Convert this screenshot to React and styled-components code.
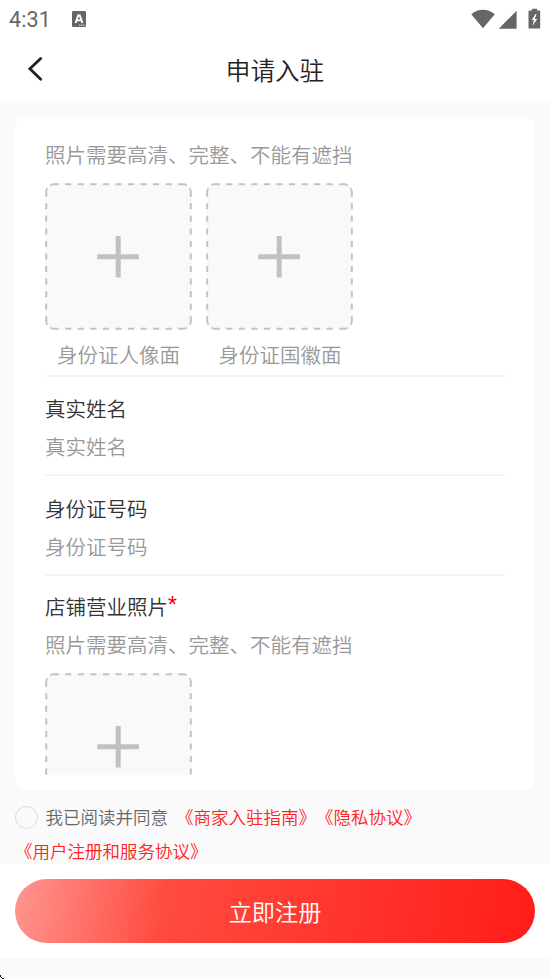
import React from "react";
import styled, { createGlobalStyle } from "styled-components";

const fontStack = '"Noto Sans CJK SC DemiLight", "Noto Sans CJK SC", sans-serif';

const GlobalStyle = createGlobalStyle`
  * { box-sizing: border-box; }
  body {
    margin: 0;
    background: #fafafa;
    font-family: ${fontStack};
    text-spacing-trim: space-all;
  }
`;

const Screen = styled.div`
  width: 550px;
  height: 979px;
  display: flex;
  flex-direction: column;
  overflow: hidden;
  background: #fafafa;
  position: relative;
`;

const StatusBar = styled.div`
  height: 38px;
  flex: none;
  padding: 0 9px 0 9px;
  display: flex;
  align-items: center;
  background: #fff;
`;

const Clock = styled.span`
  width: 63px;
  padding-top: 1px;
  font: 400 21.5px/38px Roboto, sans-serif;
  color: #666;
  letter-spacing: 0.1px;
`;

const StatusIcons = styled.div`
  margin-left: auto;
  display: flex;
`;

const Header = styled.header`
  height: 63px;
  flex: none;
  background: #fff;
  display: grid;
  grid-template-columns: 70px 1fr 70px;
  align-items: center;
`;

const BackButton = styled.button`
  border: 0;
  padding: 0 0 1px 26px;
  height: 63px;
  background: none;
  display: flex;
  align-items: center;
`;

const Title = styled.h1`
  margin: 0;
  padding-bottom: 1px;
  text-align: center;
  font-size: 24.6px;
  line-height: 36px;
  font-weight: 400;
  color: #222;
`;

const Card = styled.main`
  margin: 15px 15px 0;
  height: 674px;
  flex: none;
  padding: 23px 30px 15px;
  border-radius: 13px;
  background: #fff;
`;

const Scroller = styled.div`
  height: 636px;
  overflow: hidden;
`;

const Section = styled.section`
  height: ${(p) => p.$height}px;
  padding-top: ${(p) => p.$top}px;
  border-bottom: 2px solid #f5f5f5;
`;

const Line = styled.div`
  height: 30px;
  font-size: 20.5px;
  line-height: 30px;
  white-space: nowrap;
  color: ${(p) => (p.$muted ? "#999" : "#333")};
  & + & { margin-top: 8px; }
`;

const Required = styled.span`
  font-family: Roboto, sans-serif;
  line-height: 1;
  vertical-align: 4px;
  color: #f00;
`;

const Uploads = styled.div`
  display: flex;
  gap: 14.4px;
  padding-top: ${(p) => p.$top}px;
`;

const Upload = styled.div`
  width: 147px;
  display: flex;
  flex-direction: column;
  gap: 9px;
  align-items: center;
`;

const Agreement = styled.div`
  height: 74px;
  flex: none;
  padding: 10px 15px 0;
  display: flex;
  flex-wrap: wrap;
  align-content: flex-start;
  font-size: 17.5px;
  line-height: 34px;
  color: #666;
`;

const Radio = styled.span`
  width: 23px;
  height: 23px;
  margin: 6px 7.5px 0 0;
  border: 1.5px solid #dcdcdc;
  border-radius: 50%;
`;

const Consent = styled.span`
  margin-right: 8px;
`;

const PolicyLink = styled.a`
  color: #ff221d;
`;

const Footer = styled.footer`
  height: 94px;
  flex: none;
  padding: 14.5px 15px 0;
  background: #fff;
`;

const SubmitButton = styled.button`
  display: block;
  width: 100%;
  height: 64.5px;
  padding: 0;
  border: 0;
  border-radius: 33px;
  background: linear-gradient(100deg, #ff9690 0%, #ff4b40 29%, #ff1d18 100%);
  color: #fff;
  font: 400 23.2px/34px ${fontStack};
`;

const CornerMark = styled.svg`
  position: absolute;
  left: 0;
  bottom: 0;
`;

function UploadTile() {
  return (
    <svg width="147" height="147" viewBox="0 0 147 147" fill="none">
      <rect x="0.3" y="0.3" width="146.4" height="146.4" rx="11" fill="#f9f9f9" />
      <path
        d="M7.7 1.2h131.6M7.7 145.8h131.6M1.2 7.7v131.6M145.8 7.7v131.6"
        stroke="#c2c2c2" strokeWidth="2" strokeDasharray="6 6.56"
      />
      <path
        d="M1.2 8Q1.5 6.4 2.5 5.2M8 1.2Q6.4 1.5 5.2 2.5M139 1.2Q140.6 1.5 141.8 2.5M145.8 8Q145.5 6.4 144.5 5.2M1.2 139Q1.5 140.6 2.5 141.8M8 145.8Q6.4 145.5 5.2 144.5M139 145.8Q140.6 145.5 141.8 144.5M145.8 139Q145.5 140.6 144.5 141.8"
        stroke="#c8c8c8" strokeWidth="1.8"
      />
      <path d="M73.2 53v41.4M52.3 73.7h41.6" stroke="#c1c1c1" strokeWidth="5" />
    </svg>
  );
}

export default function App() {
  return (
    <>
      <GlobalStyle />
      <Screen lang="zh-CN">
        <StatusBar>
          <Clock>4:31</Clock>
          <svg width="14" height="16" viewBox="0 0 14 16">
            <rect width="14" height="16" rx="1.3" fill="#666" />
            <path d="M3.6 12 6.2 4.5h1.6l2.6 7.5M4.8 9.4h4.4" fill="none" stroke="#fff" strokeWidth="1.9" />
            <path d="M7 14.2h6" stroke="#fff" strokeWidth="0.9" strokeDasharray="1.4 0.7" />
          </svg>
          <StatusIcons>
            <svg width="70" height="22" viewBox="471 7 70 22" fill="#666">
              <path d="M471.2 13.2Q483 4.4 494.8 13.2L483 27.2Z" />
              <path d="M516.6 9.7v18h-17.8z" />
              <path fillRule="evenodd" d="M532 7.8h5v1.8h2.2q1 0 1 1v15.8q0 1.2-1 1.2h-9.7q-1 0-1-1.2V10.6q0-1 1-1h2.5zM535.5 13l-3.7 6h2.1l-1.4 6.1 4.6-7.2h-2.3l1.8-4.9z" />
            </svg>
          </StatusIcons>
        </StatusBar>
        <Header>
          <BackButton aria-label="返回">
            <svg width="18" height="26" viewBox="0 0 18 26">
              <path d="M14.7 2.4 3.9 12.8l10.8 10.5" fill="none" stroke="#222" strokeWidth="2.8" strokeLinecap="round" />
            </svg>
          </BackButton>
          <Title>申请入驻</Title>
        </Header>
        <Card>
          <Scroller>
            <Section $height={238} $top={0}>
              <Line $muted>照片需要高清、完整、不能有遮挡</Line>
              <Uploads $top={14}>
                <Upload>
                  <UploadTile />
                  <Line $muted>身份证人像面</Line>
                </Upload>
                <Upload>
                  <UploadTile />
                  <Line $muted>身份证国徽面</Line>
                </Upload>
              </Uploads>
            </Section>
            <Section $height={99.3} $top={15.5}>
              <Line>真实姓名</Line>
              <Line $muted>真实姓名</Line>
            </Section>
            <Section $height={99.3} $top={16.3}>
              <Line>身份证号码</Line>
              <Line $muted>身份证号码</Line>
            </Section>
            <Section $height={260} $top={15.9}>
              <Line>店铺营业照片<Required>*</Required></Line>
              <Line $muted>照片需要高清、完整、不能有遮挡</Line>
              <Uploads $top={13.5}>
                <UploadTile />
              </Uploads>
            </Section>
          </Scroller>
        </Card>
        <Agreement>
          <Radio />
          <Consent>我已阅读并同意</Consent>
          <PolicyLink>《商家入驻指南》</PolicyLink>
          <PolicyLink>《隐私协议》</PolicyLink>
          <PolicyLink>《用户注册和服务协议》</PolicyLink>
        </Agreement>
        <Footer>
          <SubmitButton>立即注册</SubmitButton>
        </Footer>
        <CornerMark width="4" height="4" viewBox="0 0 4 4">
          <path d="M0 0h1v2H0zM1 2h1v1H1zM2 3h2v1H2z" fill="#111" />
        </CornerMark>
      </Screen>
    </>
  );
}
